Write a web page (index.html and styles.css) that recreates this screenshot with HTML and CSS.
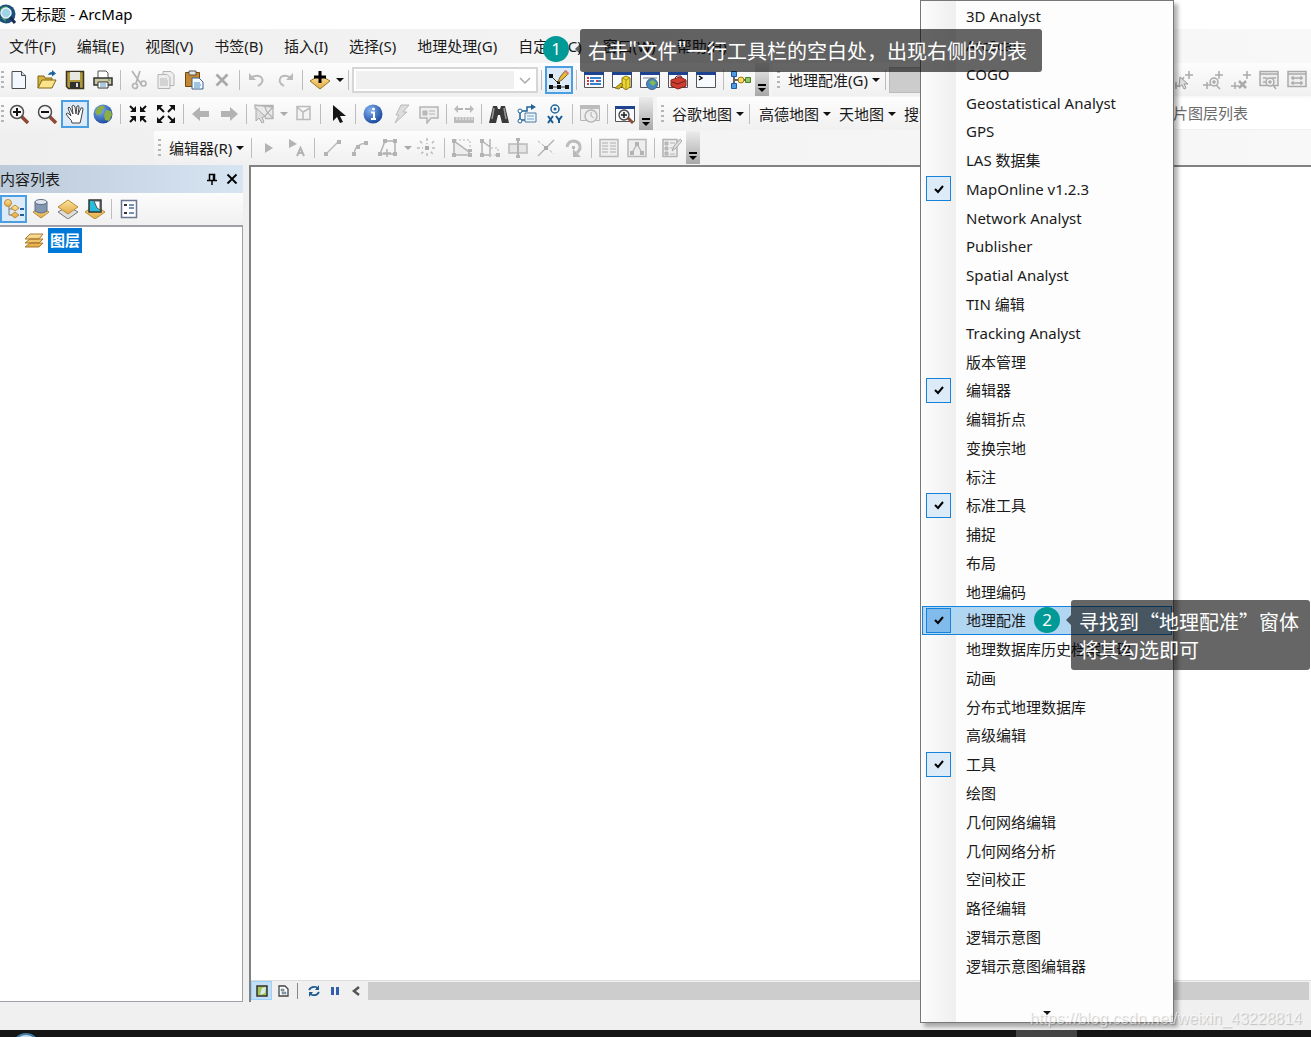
FILE: index.html
```html
<!DOCTYPE html>
<html lang="zh-CN">
<head>
<meta charset="utf-8">
<title>无标题 - ArcMap</title>
<link rel="stylesheet" href="styles.css">
</head>
<body>
<svg class="sprite" aria-hidden="true">
  <defs>
    <linearGradient id="gold" x1="0" y1="0" x2="0" y2="1"><stop offset="0" stop-color="#fbe3a0"/><stop offset="1" stop-color="#e3a93f"/></linearGradient>
    <radialGradient id="blue" cx=".35" cy=".3" r=".8"><stop offset="0" stop-color="#7fb0f0"/><stop offset="1" stop-color="#123f97"/></radialGradient>
  </defs>
  <symbol id="app" viewBox="0 0 17 20"><circle cx="6" cy="10" r="9.500" fill="#1d4f7c"/><path d="M0 5q4-4 8-2l-2 5-4 3zM1 14l4-1 1 5z" fill="#3f9a62"/><circle cx="6" cy="9" r="5" fill="#9fd3e8" stroke="#e8f3f8" stroke-width="1.500"/><path d="M10 13l5 6" stroke="#1b2f52" stroke-width="3"/></symbol>
  <symbol id="new" viewBox="0 0 20 20"><path d="M3 1.500h9.500l4 4v13H3z" fill="#f3f8fe" stroke="#4a4a4a"/><path d="M12.500 1.500v4h4" fill="#c5daf0" stroke="#4a4a4a"/></symbol>
  <symbol id="open" viewBox="0 0 20 20"><path d="M1 18V6h6l1 2h7v3" fill="#d6b445" stroke="#806512"/><path d="M1 18l4-8h14l-4 8z" fill="#fbe389" stroke="#806512"/><path d="M11 5q1-3 4-3V0l4 3.500-4 3v-2q-2 0-4 .5z" fill="#1c619f"/></symbol>
  <symbol id="save" viewBox="0 0 20 20"><path d="M1.500 1.500h17v17h-15l-2-2z" fill="#ad963b" stroke="#38321e" stroke-width="1.500"/><path d="M5 2h10v8H5z" fill="#e7e7e2"/><path d="M5 12h10v6H5z" fill="#303030"/><path d="M11 13h2v4h-2z" fill="#ddd"/></symbol>
  <symbol id="print" viewBox="0 0 20 20"><path d="M5 8V1h8l2 2v5" fill="#fff" stroke="#555"/><path d="M1 8h18v7H1z" fill="#c9c7a6" stroke="#333" stroke-width="1.500"/><path d="M5 12h10v6H5z" fill="#fff" stroke="#333"/><path d="M7 14h6M7 16h6" stroke="#5794c5"/><path d="M15 10h2" stroke="#3d8d35"/></symbol>
  <symbol id="cut" viewBox="0 0 20 20"><g fill="none" stroke="#b4b4b4" stroke-width="1.700"><path d="M4 1l9 13M12 1L8 13"/><circle cx="7" cy="16" r="2.500"/><circle cx="15.500" cy="13.500" r="2.500"/></g></symbol>
  <symbol id="copy" viewBox="0 0 20 20"><path d="M7 1.500h8l3 3v11H7z" fill="#eee" stroke="#b4b4b4"/><path d="M2 4.500h9l3 3v11H2z" fill="#eee" stroke="#b4b4b4"/><path d="M4 9h7M4 11h8M4 13h8M4 15h8" stroke="#b9b9b9"/></symbol>
  <symbol id="paste" viewBox="0 0 20 20"><path d="M1.500 2.500h14v14h-14z" fill="#c58630" stroke="#704711"/><path d="M5 1h7v4H5z" fill="#e5e5df" stroke="#555"/><path d="M8 8h7l4 4v7H8z" fill="#f5faff" stroke="#3a638f"/><path d="M10 13h6M10 15h7M10 17h6" stroke="#4a90c8"/></symbol>
  <symbol id="delete" viewBox="0 0 20 20"><path d="M4.500 4.500l11 11m0-11l-11 11" stroke="#a9a9a9" stroke-width="2.700"/></symbol>
  <symbol id="undo" viewBox="0 0 20 20"><path d="M4 8q5-4 10-1 4 5-3 9" fill="none" stroke="#b9b9b9" stroke-width="2"/><path d="M2 3v7h7z" fill="#b9b9b9"/></symbol>
  <symbol id="redo" viewBox="0 0 20 20"><path d="M16 8Q11 4 6 7q-4 5 3 9" fill="none" stroke="#b9b9b9" stroke-width="2"/><path d="M18 3v7h-7z" fill="#b9b9b9"/></symbol>
  <symbol id="add" viewBox="0 0 20 20"><path d="M0 11l10-6 10 6-10 8z" fill="url(#gold)" stroke="#9a7428"/><path d="M10 1v12M4 7h12" stroke="#000" stroke-width="3"/></symbol>
  <symbol id="edit" viewBox="0 0 20 20"><path d="M2 6l7 7M3 17h14" stroke="#333"/><path d="M0 4h4v4H0zM0 15h4v4H0zM8 15h4v4H8zM16 15h4v4h-4zM8 11h3v3H8z" fill="#111"/><path d="M9 12l2-5 5-6 3 3-6 6z" fill="#e5b93c" stroke="#80642b"/><path d="M15 1l2-1 3 3-1 2z" fill="#d77c72"/></symbol>
  <symbol id="win" viewBox="0 0 20 20"><path d="M.5 2.500h19v15H.5z" fill="#f7faff" stroke="#555"/><path d="M0 2h20v3H0z" fill="#1d438e"/></symbol>
  <symbol id="toc" viewBox="0 0 20 20"><use href="#win"/><path d="M3 8h2M3 11h2M3 14h2M12 11h2" stroke="#d23838" stroke-width="2"/><path d="M6 8h11M6 11h4M6 14h11M14 11h3" stroke="#3680d0" stroke-width="2"/></symbol>
  <symbol id="catalog" viewBox="0 0 20 20"><use href="#win"/><path d="M10 8l4-2 4 2v9l-4 3-4-3z" fill="#ecd632" stroke="#877715"/><path d="M10 8l4 2 4-2M14 10v9" fill="none" stroke="#a8951b"/><path d="M3 18l6-5 2 2-4 4z" fill="#c9b122" stroke="#877715"/></symbol>
  <symbol id="search" viewBox="0 0 20 20"><use href="#win"/><path d="M3 8h14" stroke="#bbb" stroke-width="2"/><circle cx="12" cy="14" r="5.500" fill="#478ac2" stroke="#476580"/><path d="M9 12l4-2 3 3-3 3z" fill="#86b94e"/></symbol>
  <symbol id="toolbox" viewBox="0 0 20 20"><use href="#win"/><path d="M3 10l9-3 6 3v6l-8 3-7-3z" fill="#cf3c30" stroke="#852018"/><path d="M7 8l2-2h4l1 2M4 12l6 2 7-3" fill="none" stroke="#701c18"/></symbol>
  <symbol id="python" viewBox="0 0 20 20"><use href="#win"/><path d="M3 6l3 2-3 2" fill="none" stroke="#000" stroke-width="1.500"/></symbol>
  <symbol id="model" viewBox="0 0 20 20"><path d="M3 4v13M4 10h13" stroke="#333" stroke-width="1.500"/><path d="M.5 1.500h5v5h-5zM.5 13.500h5v5h-5z" fill="#4d9ae5" stroke="#205b9e"/><circle cx="10" cy="10" r="3" fill="#ffd85a" stroke="#9c761c"/><path d="M14.500 7.500h5v5h-5z" fill="#92c865" stroke="#467e26"/></symbol>
  <symbol id="zin" viewBox="0 0 20 20"><path d="M12 12l7 7" stroke="#8d4b35" stroke-width="3.500"/><circle cx="8" cy="8" r="6.500" fill="#f6f6f6" stroke="#505050" stroke-width="1.500"/><path d="M8 4v8M4 8h8" stroke="#111" stroke-width="2"/></symbol>
  <symbol id="zout" viewBox="0 0 20 20"><path d="M12 12l7 7" stroke="#8d4b35" stroke-width="3.500"/><circle cx="8" cy="8" r="6.500" fill="#f6f6f6" stroke="#505050" stroke-width="1.500"/><path d="M4 8h8" stroke="#111" stroke-width="2"/></symbol>
  <symbol id="pan" viewBox="0 0 20 20"><path d="M7 19q0-3-3-5L1 10q1-2 3 0l2 2L3 4q1-2 2 0l3 6L7 2q2-2 3 1l1 7 1-8q2-1 2 1l-1 8 3-7q2-1 2 1l-2 10-1 4z" fill="#fff" stroke="#444"/></symbol>
  <symbol id="globe" viewBox="0 0 20 20"><circle cx="10" cy="10" r="9.500" fill="url(#blue)"/><path d="M5 3q6-3 7 1l-3 2-1 4-4 1-2-3zM13 6l5 1 1 4-3 6-4-1-1-5z" fill="#8cae42"/></symbol>
  <symbol id="fin" viewBox="0 0 20 20"><path d="M2 2l5 5M18 2l-5 5M2 18l5-5M18 18l-5-5" stroke="#111" stroke-width="2"/><path d="M8 2v6H2zM12 2v6h6zM8 18v-6H2zM12 18v-6h6z" fill="#111"/></symbol>
  <symbol id="fout" viewBox="0 0 20 20"><path d="M3 3l5 5M17 3l-5 5M3 17l5-5M17 17l-5-5" stroke="#111" stroke-width="2"/><path d="M1 1h6L1 7zM19 1h-6l6 6zM1 19h6l-6-6zM19 19h-6l6-6z" fill="#111"/></symbol>
  <symbol id="back" viewBox="0 0 20 20"><path d="M1 10l8-7v4h9v6H9v4z" fill="#b3b3b3"/></symbol>
  <symbol id="fwd" viewBox="0 0 20 20"><path d="M19 10l-8-7v4H2v6h9v4z" fill="#b3b3b3"/></symbol>
  <symbol id="selfeat" viewBox="0 0 20 20"><path d="M1 1.500h18v13h-8M1 5V1l18 2-8 9M10 1l3 7 6 6" fill="#eaeaea" stroke="#b3b3b3" stroke-width="1.300"/><path d="M2 4l10 9H8l2 5-2 1-3-5-3 3z" fill="#ddd" stroke="#aaa"/></symbol>
  <symbol id="clearsel" viewBox="0 0 20 20"><path d="M4 2.500h13v13H4zM4 3l6 5 7-4M10 8v7" fill="#f3f3f3" stroke="#bababa" stroke-width="1.500"/></symbol>
  <symbol id="arrow" viewBox="0 0 20 20"><path d="M5 1v16l4-4 3 6 3-1-3-6h6z" fill="#161616"/></symbol>
  <symbol id="info" viewBox="0 0 20 20"><circle cx="10" cy="10" r="9.500" fill="url(#blue)"/><circle cx="10.500" cy="5" r="1.500" fill="#fff"/><path d="M8 8.500h3V15m-3 0h5" fill="none" stroke="#fff" stroke-width="2"/></symbol>
  <symbol id="bolt" viewBox="0 0 20 20"><path d="M10 1h8l-6 7h4L4 19l4-8H5z" fill="#ddd" stroke="#b9b9b9"/></symbol>
  <symbol id="bubble" viewBox="0 0 20 20"><path d="M1 3h18v11h-7l-4 5v-5H1z" fill="#eee" stroke="#b5b5b5" stroke-width="1.500"/><path d="M4 7h4v4H4zM10 7h6M10 10h6" fill="#bbb" stroke="#b5b5b5"/></symbol>
  <symbol id="measure" viewBox="0 0 20 20"><path d="M1 5h8M11 5h8" stroke="#b5b5b5" stroke-width="2"/><path d="M0 5l4-4v8zM20 5l-4-4v8zM0 13h20v6H0z" fill="#bcbcbc"/><path d="M3 13v3M6 13v3M9 13v3M12 13v3M15 13v3M18 13v3" stroke="#eee"/></symbol>
  <symbol id="find" viewBox="0 0 20 20"><path d="M4 2h4l1 3h2l1-3h4l4 17h-7l-2-8H9l-2 8H0z" fill="#393939"/><path d="M5 4L3 15M15 4l2 11" stroke="#999" stroke-width="1.500"/></symbol>
  <symbol id="route" viewBox="0 0 20 20"><path d="M3 16V7h7V3h6M3 16h5" fill="none" stroke="#1f6399" stroke-width="1.500"/><path d="M14 0l5 3-5 3z" fill="#1f6399"/><circle cx="3" cy="7" r="2" fill="#fff" stroke="#1f6399"/><circle cx="3" cy="17" r="2" fill="#fff" stroke="#1f6399"/><path d="M8 9h11v9H8z" fill="#eef5fb" stroke="#4a7aa5"/><path d="M10 12h7M10 15h7" stroke="#71a0c4"/></symbol>
  <symbol id="target" viewBox="0 0 20 20"><circle cx="10" cy="5" r="4" fill="none" stroke="#21679d" stroke-width="1.500"/><circle cx="10" cy="5" r="1.500" fill="#21679d"/><path d="M3 12l5 7M8 12l-5 7M11 12l3 4 3-4M14 16v3" fill="none" stroke="#175b92" stroke-width="2"/></symbol>
  <symbol id="time" viewBox="0 0 20 20"><path d="M.5 1.500h19v15H.5z" fill="#eee" stroke="#b6b6b6"/><path d="M0 1h20v4H0z" fill="#bcbcbc"/><circle cx="11" cy="12" r="6" fill="#eee" stroke="#b6b6b6" stroke-width="1.500"/><path d="M11 8v4l3 2" fill="none" stroke="#b0b0b0"/></symbol>
  <symbol id="viewer" viewBox="0 0 20 20"><use href="#win"/><path d="M13 14l5 5" stroke="#8d4b35" stroke-width="3"/><circle cx="9" cy="11" r="5" fill="#eee" stroke="#444" stroke-width="1.300"/><path d="M9 8v6M6 11h6" stroke="#222" stroke-width="1.500"/></symbol>
  <symbol id="etool" viewBox="0 0 20 20"><path d="M6 5v10l8-5z" fill="#b3b3b3"/></symbol>
  <symbol id="eanno" viewBox="0 0 20 20"><path d="M2 1v9l8-4z" fill="#b3b3b3"/><path d="M10 18l3.500-8L17 18M11 15h5" fill="none" stroke="#b3b3b3" stroke-width="2"/></symbol>
  <symbol id="line" viewBox="0 0 20 20"><path d="M4 16L16 4" stroke="#b9b9b9" stroke-width="1.500"/><path d="M2 14h4v4H2zM15 2h4v4h-4z" fill="#b3b3b3"/></symbol>
  <symbol id="arc" viewBox="0 0 20 20"><path d="M4 16q1-10 12-11" fill="none" stroke="#b9b9b9" stroke-width="1.500"/><path d="M2 14h4v4H2zM6 7h4v4H6zM14 3h4v4h-4z" fill="#b3b3b3"/></symbol>
  <symbol id="poly" viewBox="0 0 20 20"><path d="M7 3h10v13H2zM9 11v8M5 15h8" fill="none" stroke="#b3b3b3" stroke-width="1.500"/><path d="M5 1h4v4H5zM15 1h4v4h-4zM15 14h4v4h-4zM0 14h4v4H0z" fill="#b3b3b3"/></symbol>
  <symbol id="rays" viewBox="0 0 20 20"><path d="M10 0v20M0 10h20M3 3l14 14M17 3L3 17" stroke="#bbb" stroke-width="1.500" stroke-dasharray="3 2"/><path d="M6 6h8v8H6z" fill="#f5f5f5"/><path d="M8 8h4v4H8z" fill="#aaa"/></symbol>
  <symbol id="reshape" viewBox="0 0 20 20"><path d="M2 17V3l15 11v3z" fill="#eee" stroke="#b3b3b3" stroke-width="1.500"/><path d="M3 2h15v12" fill="none" stroke="#b3b3b3" stroke-dasharray="2"/><path d="M0 1h4v4H0zM0 15h4v4H0zM16 15h4v4h-4zM16 11h4v3h-4z" fill="#b3b3b3"/></symbol>
  <symbol id="split" viewBox="0 0 20 20"><path d="M2 17V3l8 6v8zM10 1v18" fill="none" stroke="#b3b3b3" stroke-width="1.500"/><path d="M11 10h7v7h-7" fill="none" stroke="#b3b3b3" stroke-dasharray="2"/><path d="M0 1h4v4H0zM0 15h4v4H0zM16 15h4v4h-4z" fill="#b3b3b3"/></symbol>
  <symbol id="cutpoly" viewBox="0 0 20 20"><path d="M1 6h18v9H1z" fill="#e5e5e5" stroke="#b9b9b9" stroke-width="1.500"/><path d="M10 1v18" stroke="#b3b3b3" stroke-width="2"/><path d="M8 0h4v3H8zM8 17h4v3H8z" fill="#b3b3b3"/></symbol>
  <symbol id="cross" viewBox="0 0 20 20"><path d="M2 18L18 2" stroke="#b3b3b3" stroke-width="1.500"/><path d="M2 3l16 13" stroke="#b3b3b3" stroke-dasharray="3 2"/><path d="M8 8h4v4H8z" fill="#aaa"/></symbol>
  <symbol id="rotate" viewBox="0 0 20 20"><path d="M3 9q1-6 7-6 7 1 6 8l-3 4" fill="none" stroke="#bdbdbd" stroke-width="3"/><path d="M9 11v8h8zM8 8h3v3H8z" fill="#b9b9b9"/></symbol>
  <symbol id="attr" viewBox="0 0 20 20"><path d="M1 1.500h18v17H1z" fill="#eee" stroke="#b9b9b9" stroke-width="1.500"/><path d="M3 5h6M3 8h6M3 11h6M3 14h6M11 5h6M11 8h6M11 11h6M11 14h6" stroke="#c3c3c3" stroke-width="1.500"/></symbol>
  <symbol id="sketch" viewBox="0 0 20 20"><path d="M1 1.500h18v17H1z" fill="#eee" stroke="#b9b9b9" stroke-width="1.500"/><path d="M5 15l5-9 5 9" fill="none" stroke="#b9b9b9" stroke-width="1.500"/><path d="M3 13h4v4H3zM8 4h4v4H8zM13 13h4v4h-4z" fill="#b3b3b3"/></symbol>
  <symbol id="create" viewBox="0 0 20 20"><path d="M1 1.500h14v17H1z" fill="#eee" stroke="#b3b3b3" stroke-width="1.500"/><path d="M3 4h3v3H3zM3 9h3v3H3zM3 14h3v3H3zM8 5h5M8 10h3M8 16h5" fill="#bbb" stroke="#b3b3b3"/><path d="M10 13l2-5 6-7 2 2-6 7z" fill="#ddd" stroke="#aaa"/></symbol>
  <symbol id="g1" viewBox="0 0 20 20"><path d="M14 1v8M10 5h8M1 12v7M0 16h5M9 7l-2 3" stroke="#aaa" stroke-width="1.500"/><path d="M5 7l8 7h-4l2 4-2 1-2-4-3 2z" fill="#ddd" stroke="#999"/></symbol>
  <symbol id="g2" viewBox="0 0 20 20"><path d="M16 1v8M12 5h8M4 12v7M0 15h8M13 15l4 4" stroke="#aaa" stroke-width="1.500"/><circle cx="11" cy="12" r="4" fill="#eee" stroke="#aaa" stroke-width="1.500"/><path d="M9 12h4M11 10v4" stroke="#999"/></symbol>
  <symbol id="g3" viewBox="0 0 20 20"><path d="M16 1v8M12 5h8M4 12v7M0 16h8" stroke="#aaa" stroke-width="1.500"/><path d="M8 11l7 7m0-7l-7 7" stroke="#aaa" stroke-width="2.500"/></symbol>
  <symbol id="g4" viewBox="0 0 20 20"><path d="M1 1.500h18v14H1z" fill="#eee" stroke="#aaa" stroke-width="1.500"/><path d="M1 4h18M4 8h4M13 8h4M4 12h3M14 15l3 4" stroke="#aaa" stroke-width="1.500"/><circle cx="11" cy="12" r="4" fill="#eee" stroke="#aaa" stroke-width="1.500"/><path d="M9 12h4M11 10v4" stroke="#999"/></symbol>
  <symbol id="g5" viewBox="0 0 20 20"><path d="M1 1.500h18v15H1z" fill="#eee" stroke="#aaa" stroke-width="1.500"/><path d="M1 4h18M4 8h12M4 13h12M6 6v4M14 6v4M6 11v4M14 11v4" stroke="#aaa" stroke-width="1.300"/></symbol>
  <symbol id="t1" viewBox="0 0 20 20"><path d="M5 5v11h6M5 10h6" fill="none" stroke="#777"/><circle cx="4" cy="4" r="3.500" fill="url(#gold)" stroke="#bf8b35"/><path d="M7 9l4-3 4 3-4 3zM7 16l4-3 4 3-4 3z" fill="url(#gold)" stroke="#bf8b35"/><path d="M16 10h4M16 16h4" stroke="#225f9a" stroke-width="2"/></symbol>
  <symbol id="t2" viewBox="0 0 20 20"><path d="M2 13l8-5 8 5-8 6z" fill="url(#gold)" stroke="#b98a36"/><path d="M4 3v9q6 4 12 0V3" fill="#8396b0" stroke="#5d6d84"/><ellipse cx="10" cy="3" rx="6" ry="2.500" fill="#e0e6ef" stroke="#5d6d84"/></symbol>
  <symbol id="t3" viewBox="0 0 20 20"><path d="M0 13l10-6 10 6-10 7z" fill="#ddd" stroke="#777"/><path d="M0 8l10-7 10 7-10 7z" fill="url(#gold)" stroke="#b98a36"/></symbol>
  <symbol id="t4" viewBox="0 0 20 20"><path d="M0 13l10-7 10 7-10 7z" fill="url(#gold)" stroke="#b98a36"/><path d="M4 1h12v12H4z" fill="#24bddb" stroke="#333" stroke-width="1.500"/><path d="M9 2h6v9l-3-2z" fill="#fff" stroke="#555"/></symbol>
  <symbol id="t5" viewBox="0 0 20 20"><path d="M2.500 1.500h15v17h-15z" fill="#fff" stroke="#6b7690" stroke-width="1.500"/><path d="M5 5h3v2H5zM5 13h3v2H5z" fill="#333"/><path d="M10 6h5M10 9h5M10 14h5" stroke="#4a6e9e" stroke-width="1.500"/></symbol>
  <symbol id="layers" viewBox="0 0 20 20"><path d="M1 17l5-4h13l-4 4zM1 13l5-4h13l-4 4zM1 9l5-5h13l-4 5z" fill="url(#gold)" stroke="#a9782d"/></symbol>
  <symbol id="dataview" viewBox="0 0 12 12"><path d="M1 1h10v10H1z" fill="#a5c657" stroke="#333" stroke-width="1.500"/><path d="M6 3l4-1-1 6-5 2z" fill="#d5eaf2"/></symbol>
  <symbol id="layout" viewBox="0 0 12 12"><path d="M2 1h6l3 3v7H2z" fill="#fff" stroke="#444" stroke-width="1.300"/><path d="M4 4h3v2H4zM5 7h4v2H5z" fill="#7db0d5" stroke="#666" stroke-width=".5"/></symbol>
  <symbol id="refresh" viewBox="0 0 12 12"><path d="M1 5q2-4 7-3l2 2M11 7q-2 4-7 3L2 8" fill="none" stroke="#205b91" stroke-width="1.700"/><path d="M11 0v5H7zM1 12V7h4z" fill="#205b91"/></symbol>
  <symbol id="pause" viewBox="0 0 12 12"><path d="M2 2h3v8H2zM7 2h3v8H7z" fill="#315fa8"/></symbol>
  <symbol id="left" viewBox="0 0 12 12"><path d="M9 2L4 6l5 4" fill="none" stroke="#555" stroke-width="2.500"/></symbol>
  <symbol id="pin" viewBox="0 0 12 12"><path d="M3.500 1.500h5v6h-5zM1 7.500h10M6 8v4M7.500 1v6" fill="none" stroke="#000" stroke-width="1.500"/></symbol>
  <symbol id="close" viewBox="0 0 12 12"><path d="M1.500 1.500l9 9m0-9l-9 9" stroke="#000" stroke-width="1.800"/></symbol>
  <symbol id="chev" viewBox="0 0 12 12"><path d="M1 4l5 5 5-5" fill="none" stroke="#aaa" stroke-width="1.500"/></symbol>
</svg>

<header class="titlebar"><svg class="app-icon"><use href="#app"/></svg><span>无标题 - ArcMap</span></header>

<nav class="menubar">
  <button>文件(F)</button><button>编辑(E)</button><button>视图(V)</button><button>书签(B)</button><button>插入(I)</button><button>选择(S)</button><button>地理处理(G)</button><button>自定义(C)</button><button>窗口(W)</button><button>帮助(H)</button>
</nav>

<section class="dock">
  <div class="dock-row">
    <div class="toolbar">
      <i class="grip"></i>
      <button class="tool" aria-label="新建"><svg><use href="#new"/></svg></button>
      <button class="tool" aria-label="打开"><svg><use href="#open"/></svg></button>
      <button class="tool" aria-label="保存"><svg><use href="#save"/></svg></button>
      <button class="tool" aria-label="打印"><svg><use href="#print"/></svg></button>
      <i class="sep"></i>
      <button class="tool" aria-label="剪切"><svg><use href="#cut"/></svg></button>
      <button class="tool" aria-label="复制"><svg><use href="#copy"/></svg></button>
      <button class="tool" aria-label="粘贴"><svg><use href="#paste"/></svg></button>
      <button class="tool" aria-label="删除"><svg><use href="#delete"/></svg></button>
      <i class="sep"></i>
      <button class="tool" aria-label="撤销"><svg><use href="#undo"/></svg></button>
      <button class="tool" aria-label="恢复"><svg><use href="#redo"/></svg></button>
      <i class="sep"></i>
      <button class="tool" aria-label="添加数据"><svg><use href="#add"/></svg></button>
      <button class="drop" aria-label="添加数据选项"></button>
      <i class="sep"></i>
      <div class="scale"><input type="text" aria-label="比例尺" disabled><svg><use href="#chev"/></svg></div>
      <i class="sep"></i>
      <button class="tool on" aria-label="编辑器工具条"><svg><use href="#edit"/></svg></button>
      <i class="sep"></i>
      <button class="tool" aria-label="内容列表"><svg><use href="#toc"/></svg></button>
      <button class="tool" aria-label="目录"><svg><use href="#catalog"/></svg></button>
      <button class="tool" aria-label="搜索"><svg><use href="#search"/></svg></button>
      <button class="tool" aria-label="工具箱"><svg><use href="#toolbox"/></svg></button>
      <button class="tool" aria-label="Python"><svg><use href="#python"/></svg></button>
      <i class="sep"></i>
      <button class="tool" aria-label="模型构建器"><svg><use href="#model"/></svg></button>
      <button class="more" aria-label="更多"></button>
    </div>
    <div class="toolbar grow">
      <i class="grip inset"></i>
      <button class="text-tool">地理配准(G)<b class="caret"></b></button>
      <i class="sep"></i>
      <input class="raster" type="text" aria-label="配准图层" disabled>
      <button class="tool" aria-label="选择连接"><svg><use href="#g1"/></svg></button>
      <button class="tool" aria-label="缩放至连接"><svg><use href="#g2"/></svg></button>
      <button class="tool" aria-label="删除连接"><svg><use href="#g3"/></svg></button>
      <button class="tool" aria-label="查看器"><svg><use href="#g4"/></svg></button>
      <button class="tool" aria-label="连接表"><svg><use href="#g5"/></svg></button>
    </div>
  </div>
  <div class="dock-row">
    <div class="toolbar">
      <i class="grip"></i>
      <button class="tool" aria-label="放大"><svg><use href="#zin"/></svg></button>
      <button class="tool" aria-label="缩小"><svg><use href="#zout"/></svg></button>
      <button class="tool on" aria-label="平移"><svg><use href="#pan"/></svg></button>
      <button class="tool" aria-label="全图"><svg><use href="#globe"/></svg></button>
      <i class="sep"></i>
      <button class="tool" aria-label="固定比例放大"><svg><use href="#fin"/></svg></button>
      <button class="tool" aria-label="固定比例缩小"><svg><use href="#fout"/></svg></button>
      <i class="sep"></i>
      <button class="tool" aria-label="上一范围"><svg><use href="#back"/></svg></button>
      <button class="tool" aria-label="下一范围"><svg><use href="#fwd"/></svg></button>
      <i class="sep"></i>
      <button class="tool" aria-label="选择要素"><svg><use href="#selfeat"/></svg></button>
      <button class="drop off" aria-label="选择方式"></button>
      <button class="tool" aria-label="清除选择"><svg><use href="#clearsel"/></svg></button>
      <i class="sep"></i>
      <button class="tool" aria-label="选择元素"><svg><use href="#arrow"/></svg></button>
      <i class="sep"></i>
      <button class="tool" aria-label="识别"><svg><use href="#info"/></svg></button>
      <button class="tool" aria-label="超链接"><svg><use href="#bolt"/></svg></button>
      <button class="tool" aria-label="弹出窗口"><svg><use href="#bubble"/></svg></button>
      <i class="sep"></i>
      <button class="tool" aria-label="测量"><svg><use href="#measure"/></svg></button>
      <i class="sep"></i>
      <button class="tool" aria-label="查找"><svg><use href="#find"/></svg></button>
      <button class="tool" aria-label="查找路径"><svg><use href="#route"/></svg></button>
      <button class="tool" aria-label="转到坐标"><svg><use href="#target"/></svg></button>
      <i class="sep"></i>
      <button class="tool" aria-label="时间滑块"><svg><use href="#time"/></svg></button>
      <i class="sep"></i>
      <button class="tool" aria-label="查看器窗口"><svg><use href="#viewer"/></svg></button>
      <button class="more" aria-label="更多"></button>
    </div>
    <div class="toolbar grow">
      <i class="grip inset"></i>
      <button class="text-tool">谷歌地图<b class="caret"></b></button>
      <i class="sep"></i>
      <button class="text-tool">高德地图<b class="caret"></b></button>
      <button class="text-tool">天地图<b class="caret"></b></button>
      <button class="text-tool">搜索</button>
      <input class="tiles" type="text" aria-label="瓦片图层" value="瓦片图层列表">
    </div>
  </div>
  <div class="dock-row">
    <div class="toolbar editor">
      <i class="grip inset"></i>
      <button class="text-tool">编辑器(R)<b class="caret"></b></button>
      <i class="sep"></i>
      <button class="tool" aria-label="编辑工具"><svg><use href="#etool"/></svg></button>
      <button class="tool" aria-label="编辑注记"><svg><use href="#eanno"/></svg></button>
      <i class="sep"></i>
      <button class="tool" aria-label="直线段"><svg><use href="#line"/></svg></button>
      <button class="tool" aria-label="弧段"><svg><use href="#arc"/></svg></button>
      <button class="tool" aria-label="追踪"><svg><use href="#poly"/></svg></button>
      <button class="drop off" aria-label="构造方式"></button>
      <button class="tool" aria-label="点"><svg><use href="#rays"/></svg></button>
      <i class="sep"></i>
      <button class="tool" aria-label="编辑折点"><svg><use href="#reshape"/></svg></button>
      <button class="tool" aria-label="整形"><svg><use href="#split"/></svg></button>
      <button class="tool" aria-label="裁剪面"><svg><use href="#cutpoly"/></svg></button>
      <button class="tool" aria-label="分割"><svg><use href="#cross"/></svg></button>
      <button class="tool" aria-label="旋转"><svg><use href="#rotate"/></svg></button>
      <i class="sep"></i>
      <button class="tool" aria-label="属性"><svg><use href="#attr"/></svg></button>
      <button class="tool" aria-label="草图属性"><svg><use href="#sketch"/></svg></button>
      <i class="sep"></i>
      <button class="tool" aria-label="创建要素"><svg><use href="#create"/></svg></button>
      <button class="more" aria-label="更多"></button>
    </div>
  </div>
</section>

<main class="workspace">
  <aside class="contents">
    <div class="panel-head"><h2>内容列表</h2><button aria-label="自动隐藏"><svg><use href="#pin"/></svg></button><button aria-label="关闭"><svg><use href="#close"/></svg></button></div>
    <div class="panel-tools">
      <button class="tool on" aria-label="按绘制顺序"><svg><use href="#t1"/></svg></button>
      <button class="tool" aria-label="按源"><svg><use href="#t2"/></svg></button>
      <button class="tool" aria-label="按可见性"><svg><use href="#t3"/></svg></button>
      <button class="tool" aria-label="按选择"><svg><use href="#t4"/></svg></button>
      <i class="sep"></i>
      <button class="tool" aria-label="选项"><svg><use href="#t5"/></svg></button>
    </div>
    <div class="tree"><svg><use href="#layers"/></svg><span>图层</span></div>
  </aside>
  <section class="map">
    <div class="canvas"></div>
    <div class="viewbar">
      <button class="active" aria-label="数据视图"><svg><use href="#dataview"/></svg></button>
      <button aria-label="布局视图"><svg><use href="#layout"/></svg></button>
      <i class="sep"></i>
      <button aria-label="刷新"><svg><use href="#refresh"/></svg></button>
      <button aria-label="暂停"><svg><use href="#pause"/></svg></button>
      <button aria-label="向左滚动"><svg><use href="#left"/></svg></button>
      <div class="track"></div>
    </div>
  </section>
</main>
<footer class="status"></footer>
<div class="taskbar"><i class="orb"></i><i class="task"></i></div>

<div class="popup">
  <div class="popup-list">
    <label><input type="checkbox">3D Analyst</label>
    <label><input type="checkbox">ArcScan</label>
    <label><input type="checkbox">COGO</label>
    <label><input type="checkbox">Geostatistical Analyst</label>
    <label><input type="checkbox">GPS</label>
    <label><input type="checkbox">LAS 数据集</label>
    <label><input type="checkbox" checked>MapOnline v1.2.3</label>
    <label><input type="checkbox">Network Analyst</label>
    <label><input type="checkbox">Publisher</label>
    <label><input type="checkbox">Spatial Analyst</label>
    <label><input type="checkbox">TIN 编辑</label>
    <label><input type="checkbox">Tracking Analyst</label>
    <label><input type="checkbox">版本管理</label>
    <label><input type="checkbox" checked>编辑器</label>
    <label><input type="checkbox">编辑折点</label>
    <label><input type="checkbox">变换宗地</label>
    <label><input type="checkbox">标注</label>
    <label><input type="checkbox" checked>标准工具</label>
    <label><input type="checkbox">捕捉</label>
    <label><input type="checkbox">布局</label>
    <label><input type="checkbox">地理编码</label>
    <label class="hot"><input type="checkbox" checked>地理配准</label>
    <label><input type="checkbox">地理数据库历史档案管理</label>
    <label><input type="checkbox">动画</label>
    <label><input type="checkbox">分布式地理数据库</label>
    <label><input type="checkbox">高级编辑</label>
    <label><input type="checkbox" checked>工具</label>
    <label><input type="checkbox">绘图</label>
    <label><input type="checkbox">几何网络编辑</label>
    <label><input type="checkbox">几何网络分析</label>
    <label><input type="checkbox">空间校正</label>
    <label><input type="checkbox">路径编辑</label>
    <label><input type="checkbox">逻辑示意图</label>
    <label><input type="checkbox">逻辑示意图编辑器</label>
  </div>
  <button class="popup-more" aria-label="更多工具条"><b class="caret"></b></button>
</div>

<div class="note note-one"><span class="badge">1</span><p>右击"文件"一行工具栏的空白处，出现右侧的列表</p></div>
<div class="note note-two"><span class="badge">2</span><p>寻找到“地理配准”窗体<br>将其勾选即可</p></div>
<div class="watermark">https://blog.csdn.net/weixin_43228814</div>
</body>
</html>
```
FILE: styles.css
```css
* { box-sizing: border-box; }

body {
  margin: 0;
  position: relative;
  display: flex;
  flex-direction: column;
  min-height: 100vh;
  overflow: hidden;
  background: #f0f0f0;
  color: #1a1a1a;
  font: 15px/20px "Noto Sans", "Noto Sans CJK SC", sans-serif;
}

button, input { font: inherit; color: inherit; margin: 0; }
button { border: 0; padding: 0; background: none; white-space: nowrap; }
svg { display: block; }
.sprite { position: absolute; width: 0; height: 0; }

.titlebar {
  display: flex;
  align-items: center;
  gap: 4px;
  height: 29px;
  padding-bottom: 2px;
  background: #fff;
  color: #000;
}
.app-icon { width: 17px; height: 20px; }

.menubar {
  display: flex;
  gap: 1px;
  height: 34px;
  background: linear-gradient(90deg, #efefef, #f8f8f8);
}
.menubar button { padding: 0 10px; }
.menubar button:first-child { padding-left: 9px; }

/* Docked toolbars */
.dock { background: linear-gradient(90deg, #efefef, #f8f8f8); }
.dock-row { display: flex; height: 34px; padding-bottom: 1px; }
.toolbar {
  display: flex;
  flex: none;
  align-items: center;
  background: linear-gradient(#fdfdfd, #f0f0f0);
}
.toolbar.grow { flex: 1; min-width: 0; margin-left: 4px; }
.toolbar.editor { margin-left: 154px; }

.grip {
  flex: none;
  width: 3px;
  height: 18px;
  margin: 0 1px;
  background: repeating-linear-gradient(#b5b5b5 0 2px, transparent 2px 5px);
}
.grip.inset { margin: 0 2px 0 4px; }
.sep {
  flex: none;
  width: 1px;
  height: 20px;
  margin: 0 3px;
  background: #bdbdbd;
}
.tool {
  display: grid;
  place-items: center;
  flex: none;
  width: 28px;
  height: 28px;
}
.tool svg { width: 20px; height: 20px; }
.tool.on { border: 2px solid #4a9fe3; background: #dcebf7; }
.drop { flex: none; width: 11px; height: 28px; }
.drop::before, .caret {
  content: "";
  display: block;
  width: 0;
  margin: 0 auto;
  border: solid transparent;
  border-width: 4px 4px 0;
  border-top-color: #111;
}
.drop.off::before { border-top-color: #aaa; }
.text-tool { display: flex; align-items: center; gap: 4px; margin-left: 6px; padding-right: 2px; height: 28px; }
.editor .text-tool { padding-right: 4px; }
.more {
  align-self: stretch;
  display: flex;
  flex-direction: column;
  align-items: center;
  justify-content: flex-end;
  gap: 2px;
  width: 14px;
  padding-bottom: 4px;
  background: linear-gradient(#ececec, #a8a8a8);
}
.more::before { content: ""; width: 8px; height: 2px; background: #000; }
.more::after { content: ""; border: 4px solid transparent; border-top-color: #000; border-bottom: 0; }

.scale {
  display: flex;
  align-items: center;
  width: 186px;
  height: 26px;
  border: 2px solid #d6d6d6;
  background: #fff;
}
.scale input { flex: 1; min-width: 0; height: 18px; margin-left: 2px; border: 0; background: #f0f0f0; }
.scale svg { width: 12px; height: 12px; margin: 0 5px; }
.raster { flex: 1; min-width: 0; height: 26px; border: 1px solid #bbb; background: #ccc; margin-right: 8px; }
.tiles { width: 156px; height: 30px; margin-left: auto; padding: 0 0 2px 3px; border: 0; background: #fff; color: #6b6b6b; }

/* Contents panel and map */
.workspace { flex: 1; display: flex; gap: 6px; min-height: 0; }
.contents { flex: none; display: flex; flex-direction: column; width: 243px; }
.panel-head {
  display: flex;
  align-items: center;
  gap: 8px;
  height: 28px;
  padding-right: 5px;
  background: linear-gradient(90deg, #bccad9, #d7e5f3);
}
.panel-head h2 { flex: 1; margin: 0; font-size: 15px; font-weight: 400; }
.panel-head svg { width: 12px; height: 12px; }
.panel-tools { display: flex; align-items: center; height: 32px; background: linear-gradient(#fcfcfc, #f0f0f0); }
.panel-tools .tool { width: 27px; }
.tree {
  flex: 1;
  display: flex;
  align-items: flex-start;
  gap: 4px;
  padding: 1px 0 0 24px;
  border: solid #a0a0a8;
  border-width: 2px 1px 1px 0;
  background: #fff;
}
.tree svg { width: 20px; height: 24px; }
.tree span { padding: 2px; line-height: 21px; background: #0078d7; color: #fff; font-weight: 700; }

.map {
  flex: 1;
  display: flex;
  flex-direction: column;
  border: solid #828282;
  border-width: 2px 0 0 2px;
}
.canvas { flex: 1; background: #fff; }
.viewbar { display: flex; align-items: center; height: 22px; padding: 0 2px 2px 0; border-top: 1px solid #ddd; }
.viewbar button { display: grid; place-items: center; width: 21px; height: 19px; }
.viewbar svg { width: 12px; height: 12px; }
.viewbar .active { border: 1px solid #99d1ff; background: #c4def3; }
.viewbar .sep { height: 16px; margin: 0 5px 0 4px; background: #888; }
.viewbar .track { flex: 1; height: 18px; margin-left: 2px; background: #cdcdcd; }

.status { height: 28px; }
.taskbar { position: relative; height: 7px; overflow: hidden; background: #151515; }
.orb { position: absolute; left: 12px; top: 3px; width: 28px; height: 28px; border: 2px solid #427ba3; border-radius: 50%; background: #c8dcea; }
.task { position: absolute; right: 234px; width: 61px; height: 7px; background: #444; }

/* Toolbar list opened over the window */
.popup {
  position: absolute;
  top: 0;
  right: 137px;
  bottom: 14px;
  display: flex;
  flex-direction: column;
  width: 254px;
  padding: 1px;
  border: 1px solid #777;
  background: linear-gradient(90deg, #fbfbfb, #efefef) 2px 0 / 33px 100% no-repeat #fdfdfd;
  box-shadow: 4px 4px 4px rgba(0, 0, 0, .3);
}
.popup-list { flex: 1; display: grid; grid-auto-rows: 1fr; min-height: 0; }
.popup label {
  display: flex;
  align-items: center;
  gap: 15px;
  min-height: 0;
  padding-left: 4px;
  line-height: 20px;
  white-space: nowrap;
}
.popup input { appearance: none; width: 25px; height: 25px; }
.popup input:checked {
  border: 1px solid #1583dc;
  background: url("data:image/svg+xml,%3Csvg xmlns='http://www.w3.org/2000/svg' viewBox='0 0 12 12'%3E%3Cpath d='M2 6l3 3 5-6' fill='none' stroke='%23000' stroke-width='2'/%3E%3C/svg%3E") center / 12px no-repeat #dcebf7;
}
.popup .hot { background: #b1d6f2; box-shadow: inset 0 0 0 1px #1583dc; }
.popup .hot input { background-color: #80bbeb; }
.popup-more { display: grid; place-items: center; height: 41px; padding-top: 24px; }

/* Numbered notes */
.note { position: absolute; display: flex; align-items: flex-start; }
.note-one { top: 29px; left: 543px; }
.note-two { top: 600px; right: 1px; }
.badge {
  width: 26px;
  height: 26px;
  margin: 7px 11px 0 0;
  border-radius: 50%;
  background: #009a96;
  color: #fff;
  font-size: 17px;
  line-height: 26px;
  text-align: center;
}
.note p {
  position: relative;
  margin: 0;
  padding: 8px 11px 6px 8px;
  border-radius: 3px;
  background: rgba(0, 0, 0, .6);
  color: #fff;
  font: 20px/28px "Noto Sans CJK SC", sans-serif;
  white-space: nowrap;
}
.note-one p { padding-right: 15px; padding-bottom: 7px; }
.note p::before {
  content: "";
  position: absolute;
  top: 15px;
  left: -5px;
  border: 5px solid transparent;
  border-left: 0;
  border-right-color: rgba(0, 0, 0, .6);
}
.watermark {
  position: absolute;
  right: 9px;
  bottom: 8px;
  color: rgba(255, 255, 255, .6);
  font: 16px/20px "Liberation Sans", sans-serif;
  text-shadow: 1px 1px 1px rgba(0, 0, 0, .2);
}
```
